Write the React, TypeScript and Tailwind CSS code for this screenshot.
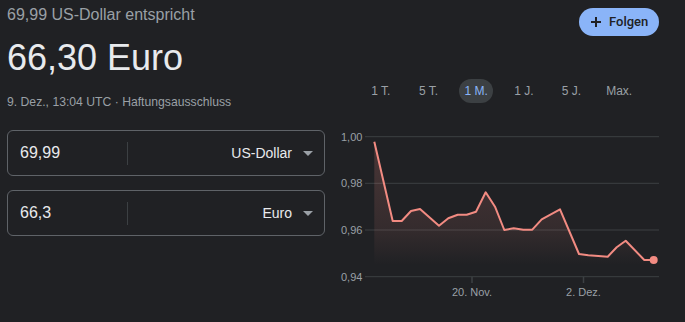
import React from 'react';

const points: [number, number][] = [
  [39.3, 16.7], [57.7, 96], [66.7, 96], [76, 86], [85, 84], [104, 100.7],
  [113.3, 93.3], [122.7, 89.7], [131.7, 89.7], [141, 86.7], [150.7, 67.3],
  [160, 81.7], [169.3, 105], [178.7, 103.3], [188.3, 104.7], [197.3, 104.7],
  [206.7, 94.3], [225, 84.3], [244, 129], [253.3, 130.3], [263.3, 131],
  [272.7, 131.7], [281.7, 122.3], [290.7, 115.7], [309.3, 135], [318.7, 135],
];

const gridLines = [
  { y: 11.7, label: '1,00' },
  { y: 58.3, label: '0,98' },
  { y: 105, label: '0,96' },
  { y: 151.7, label: '0,94' },
];

const ranges = ['1 T.', '5 T.', '1 M.', '1 J.', '5 J.', 'Max.'];

function CurrencyRow({ value, currency }: { value: string; currency: string }) {
  return (
    <div className="flex items-center h-[46px] border border-[#5f6368] rounded-[6px]">
      <div className="w-[119px] pl-3 text-base text-[#e8eaed]">{value}</div>
      <div className="w-px h-[23px] bg-[#3c4043]" />
      <div className="flex-1 flex items-center justify-end gap-[11px] pr-[11px]">
        <span className="text-sm text-[#e8eaed]">{currency}</span>
        <span className="w-0 h-0 border-l-[5px] border-r-[5px] border-t-[5px] border-l-transparent border-r-transparent border-t-[#9aa0a6]" />
      </div>
    </div>
  );
}

function RateChart() {
  const line = points.map(([x, y]) => `${x},${y}`).join(' ');
  const first = points[0];
  const last = points[points.length - 1];
  const area = `${first[0]},140 ${line} ${last[0]},140`;

  return (
    <svg width="330" height="180" className="block">
      <defs>
        <linearGradient id="fade" x1="0" y1="0" x2="0" y2="1">
          <stop offset="0%" stopColor="#f28b82" stopOpacity="0.2" />
          <stop offset="70%" stopColor="#f28b82" stopOpacity="0.1" />
          <stop offset="100%" stopColor="#f28b82" stopOpacity="0" />
        </linearGradient>
      </defs>
      {gridLines.map((g) => (
        <g key={g.label}>
          <line x1="30" x2="324" y1={g.y} y2={g.y} stroke="#3c4043" strokeWidth="1" />
          <text x="6" y={g.y + 4} fontSize="11" fill="#9aa0a6">
            {g.label}
          </text>
        </g>
      ))}
      <line x1="137" x2="137" y1="151.7" y2="158" stroke="#3c4043" strokeWidth="1.5" />
      <line x1="248.5" x2="248.5" y1="151.7" y2="158" stroke="#3c4043" strokeWidth="1.5" />
      <text x="137" y="171" fontSize="11" fill="#9aa0a6" textAnchor="middle">20. Nov.</text>
      <text x="248.5" y="171" fontSize="11" fill="#9aa0a6" textAnchor="middle">2. Dez.</text>
      <polygon points={area} fill="url(#fade)" />
      <polyline points={line} fill="none" stroke="#f28b82" strokeWidth="2" strokeLinejoin="round" />
      <circle cx={last[0]} cy={last[1]} r="4" fill="#f28b82" />
    </svg>
  );
}

export default function App() {
  return (
    <div className="w-full h-[322px] bg-[#202124] flex pl-[7px] font-['Liberation_Sans',Arial,sans-serif]">
      <div className="w-[318px] flex flex-col">
        <p className="mt-[3px] text-base leading-6 text-[#9aa0a6]">69,99 US-Dollar entspricht</p>
        <h1 className="mt-[9px] text-[36px] leading-[44px] text-[#e8eaed]">66,30 Euro</h1>
        <p className="mt-[14px] text-[12.2px] leading-4 text-[#9aa0a6]">9. Dez., 13:04 UTC · Haftungsausschluss</p>
        <div className="mt-[20px]">
          <CurrencyRow value="69,99" currency="US-Dollar" />
        </div>
        <div className="mt-[14px]">
          <CurrencyRow value="66,3" currency="Euro" />
        </div>
      </div>

      <div className="ml-[10px] w-[330px] flex flex-col">
        <div className="flex justify-end pr-[6px] mt-[8px]">
          <button className="flex items-center w-[80px] h-[28px] pl-[12px] gap-[8px] rounded-full bg-[#8ab4f8] text-[#202124] font-['Roboto',sans-serif] font-medium text-[13px]">
            <svg width="10" height="10" viewBox="0 0 10 10">
              <path d="M5 0v10M0 5h10" stroke="#202124" strokeWidth="2" />
            </svg>
            Folgen
          </button>
        </div>
        <div className="mt-[43px] ml-[22px] w-[286px] grid grid-cols-6">
          {ranges.map((r) => (
            <div key={r} className="flex justify-center">
              <span
                className={
                  r === '1 M.'
                    ? 'h-6 px-[5.5px] rounded-full bg-[#3c4043] text-[#8ab4f8] text-xs leading-6'
                    : 'h-6 px-[5.5px] text-[#9aa0a6] text-xs leading-6'
                }
              >
                {r}
              </span>
            </div>
          ))}
        </div>
        <div className="mt-[22px]">
          <RateChart />
        </div>
      </div>
    </div>
  );
}
